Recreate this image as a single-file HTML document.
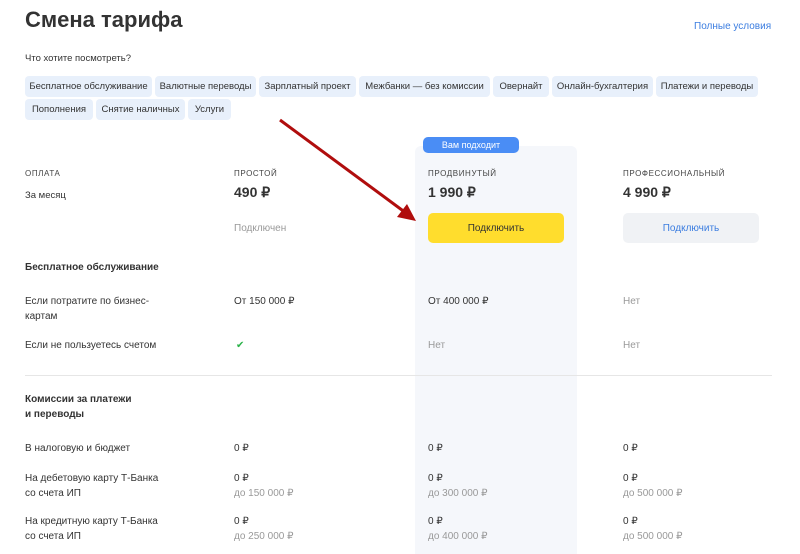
<!DOCTYPE html>
<html><head><meta charset="utf-8"><style>
*{margin:0;padding:0;box-sizing:border-box}
body{width:800px;height:554px;overflow:hidden;background:#fff;font-family:"Liberation Sans",sans-serif;color:#333;position:relative;font-size:10px}
.a{position:absolute;white-space:nowrap}
.chip{position:absolute;height:21px;background:#e8f0fb;border-radius:4px;font-size:9.5px;line-height:21px;text-align:center;color:#333}
.cap{font-size:8px;letter-spacing:.6px;color:#444}
.pr{font-size:14px;font-weight:bold;color:#333}
.g{color:#999}
.b{font-weight:bold}
.l{line-height:15px}
.btn{display:flex;align-items:center;justify-content:center}
</style></head><body>
<div class="a" style="left:25px;top:7px;font-size:22px;font-weight:bold;color:#333">Смена тарифа</div>
<div class="a" style="left:694px;top:21px;font-size:10px;color:#3b7de0">Полные условия</div>
<div class="a" style="left:25px;top:53px;font-size:9.5px">Что хотите посмотреть?</div>
<div class="chip" style="left:25px;top:76px;width:127px">Бесплатное обслуживание</div>
<div class="chip" style="left:155px;top:76px;width:101px">Валютные переводы</div>
<div class="chip" style="left:259px;top:76px;width:97px">Зарплатный проект</div>
<div class="chip" style="left:359px;top:76px;width:131px">Межбанки — без комиссии</div>
<div class="chip" style="left:493px;top:76px;width:56px">Овернайт</div>
<div class="chip" style="left:552px;top:76px;width:101px">Онлайн-бухгалтерия</div>
<div class="chip" style="left:656px;top:76px;width:102px">Платежи и переводы</div>
<div class="chip" style="left:25px;top:99px;width:68px">Пополнения</div>
<div class="chip" style="left:96px;top:99px;width:89px">Снятие наличных</div>
<div class="chip" style="left:188px;top:99px;width:43px">Услуги</div>

<div class="a" style="left:415px;top:146px;width:162px;height:408px;background:#f5f7fb;border-radius:6px 6px 0 0"></div>
<div class="a" style="left:423px;top:137px;width:96px;height:16px;background:#4a8df5;border-radius:5px;color:#fff;font-size:9px;line-height:16px;text-align:center">Вам подходит</div>

<div class="a cap" style="left:25px;top:169px">ОПЛАТА</div>
<div class="a" style="left:25px;top:190px;font-size:9.5px">За месяц</div>
<div class="a cap" style="left:234px;top:169px">ПРОСТОЙ</div>
<div class="a cap" style="left:428px;top:169px">ПРОДВИНУТЫЙ</div>
<div class="a cap" style="left:623px;top:169px">ПРОФЕССИОНАЛЬНЫЙ</div>
<div class="a pr" style="left:234px;top:184px">490 ₽</div>
<div class="a pr" style="left:428px;top:184px">1 990 ₽</div>
<div class="a pr" style="left:623px;top:184px">4 990 ₽</div>
<div class="a g" style="left:234px;top:223px">Подключен</div>
<div class="a btn" style="left:428px;top:213px;width:136px;height:30px;background:#ffdd2d;border-radius:5px;color:#333">Подключить</div>
<div class="a btn" style="left:623px;top:213px;width:136px;height:30px;background:#f0f2f5;border-radius:5px;color:#3b7de0">Подключить</div>

<div class="a b" style="left:25px;top:262px">Бесплатное обслуживание</div>
<div class="a l" style="left:25px;top:294px">Если потратите по бизнес-<br>картам</div>
<div class="a" style="left:234px;top:296px">От 150 000 ₽</div>
<div class="a" style="left:428px;top:296px">От 400 000 ₽</div>
<div class="a g" style="left:623px;top:296px">Нет</div>
<div class="a" style="left:25px;top:340px">Если не пользуетесь счетом</div>
<div class="a" style="left:236px;top:340px;color:#2cb34a;font-size:10px">✔</div>
<div class="a g" style="left:428px;top:340px">Нет</div>
<div class="a g" style="left:623px;top:340px">Нет</div>

<div class="a" style="left:25px;top:375px;width:747px;height:1px;background:#e6e6e6"></div>

<div class="a b l" style="left:25px;top:392px">Комиссии за платежи<br>и переводы</div>
<div class="a" style="left:25px;top:443px">В налоговую и бюджет</div>
<div class="a" style="left:234px;top:443px">0 ₽</div>
<div class="a" style="left:428px;top:443px">0 ₽</div>
<div class="a" style="left:623px;top:443px">0 ₽</div>
<div class="a l" style="left:25px;top:471px">На дебетовую карту Т-Банка<br>со счета ИП</div>
<div class="a l" style="left:234px;top:471px">0 ₽<br><span class="g">до 150 000 ₽</span></div>
<div class="a l" style="left:428px;top:471px">0 ₽<br><span class="g">до 300 000 ₽</span></div>
<div class="a l" style="left:623px;top:471px">0 ₽<br><span class="g">до 500 000 ₽</span></div>
<div class="a l" style="left:25px;top:514px">На кредитную карту Т-Банка<br>со счета ИП</div>
<div class="a l" style="left:234px;top:514px">0 ₽<br><span class="g">до 250 000 ₽</span></div>
<div class="a l" style="left:428px;top:514px">0 ₽<br><span class="g">до 400 000 ₽</span></div>
<div class="a l" style="left:623px;top:514px">0 ₽<br><span class="g">до 500 000 ₽</span></div>

<svg class="a" style="left:0;top:0" width="800" height="554">
<line x1="280" y1="120" x2="406" y2="213" stroke="#b00d0d" stroke-width="3"/>
<polygon points="416,221 397,217 407,204" fill="#b00d0d"/>
</svg>
</body></html>
